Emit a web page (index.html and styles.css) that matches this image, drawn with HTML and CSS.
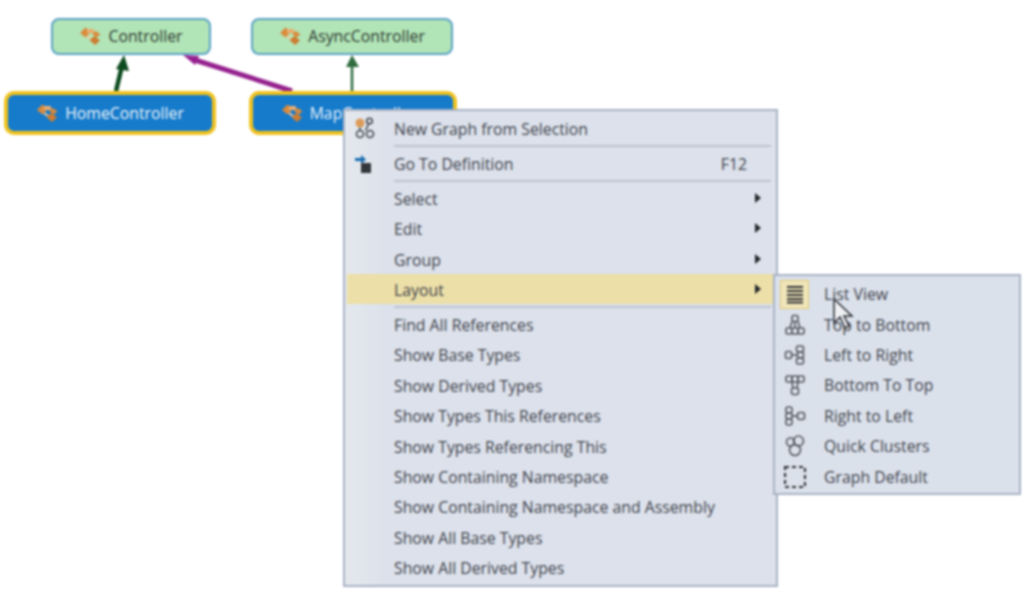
FILE: index.html
```html
<!doctype html>
<html>
    <head>
        <meta charset="UTF-8" />
        <meta name="viewport" content="width=device-width" />
        <title>Code Map</title>
        <link rel="stylesheet" href="styles.css">
    </head>
    <body>
        <svg class="defs" width="0" height="0">
            <symbol id="classIcon" viewBox="0 0 24 20">
                <path d="M1 7 6.500 1.500 12 6 6.500 11.500z" fill="#d98a3c" />
                <path d="M8 3h7v4H8z" fill="#e8ad70" />
                <path d="M13 7.500l4-2.500 4.500 3.500-4 3z" fill="#d98a3c" />
                <path d="M10.500 14l5-4 5.500 4.500-5 4.500z" fill="#cd7c30" />
                <path d="M8 10l4 3" stroke="#f3c89a" stroke-width="2" fill="none" />
            </symbol>
        </svg>

        <div class="canvas">
            <svg class="edges" width="1024" height="592" viewBox="0 0 1024 592">
                <path d="M116 91 122 66" stroke="#0c4a1e" stroke-width="4.500" fill="none" />
                <path d="M124 55 116 69 129 71z" fill="#0c4a1e" />
                <path d="M292 91 195 60" stroke="#96228f" stroke-width="5" fill="none" />
                <path d="M183 55 199 56 195 65z" fill="#96228f" />
                <path d="M352 91V64" stroke="#2f6b3f" stroke-width="2.500" fill="none" />
                <path d="M352 55 346 67H359z" fill="#2f6b3f" />
            </svg>

            <div class="node base nodeController">
                <svg class="nodeIcon"><use href="#classIcon" /></svg>
                <span>Controller</span>
            </div>
            <div class="node base nodeAsync">
                <svg class="nodeIcon"><use href="#classIcon" /></svg>
                <span>AsyncController</span>
            </div>
            <div class="node picked nodeHome">
                <svg class="nodeIcon"><use href="#classIcon" /></svg>
                <span>HomeController</span>
            </div>
            <div class="node picked nodeMap">
                <svg class="nodeIcon"><use href="#classIcon" /></svg>
                <span>MapController</span>
            </div>

            <div class="menu mainMenu">
                <div class="item">
                    <svg class="icon" viewBox="0 0 22 22" fill="none" stroke="#44484f" stroke-width="1.600">
                        <circle cx="6" cy="6" r="4.500" fill="#dc9b58" stroke="none" />
                        <circle cx="15.500" cy="4" r="2.800" />
                        <path d="M14.500 7 11.500 13.500M6 10.500v3" />
                        <circle cx="6" cy="17" r="3.500" />
                        <circle cx="16" cy="17" r="3.500" />
                    </svg>
                    <span class="label">New Graph from Selection</span>
                </div>
                <div class="sep"></div>
                <div class="item">
                    <svg class="icon" viewBox="0 0 22 22">
                        <path d="M1 6h6V3l5 4.500L7 12V9H1z" fill="#1a6cb0" />
                        <rect x="7" y="11" width="10" height="10" fill="#33363b" />
                    </svg>
                    <span class="label">Go To Definition</span>
                    <span class="key">F12</span>
                </div>
                <div class="sep"></div>
                <div class="item"><span class="icon"></span><span class="label">Select</span><span class="more"></span></div>
                <div class="item"><span class="icon"></span><span class="label">Edit</span><span class="more"></span></div>
                <div class="item"><span class="icon"></span><span class="label">Group</span><span class="more"></span></div>
                <div class="item open"><span class="icon"></span><span class="label">Layout</span><span class="more"></span></div>
                <div class="sep"></div>
                <div class="item"><span class="icon"></span><span class="label">Find All References</span></div>
                <div class="item"><span class="icon"></span><span class="label">Show Base Types</span></div>
                <div class="item"><span class="icon"></span><span class="label">Show Derived Types</span></div>
                <div class="item"><span class="icon"></span><span class="label">Show Types This References</span></div>
                <div class="item"><span class="icon"></span><span class="label">Show Types Referencing This</span></div>
                <div class="item"><span class="icon"></span><span class="label">Show Containing Namespace</span></div>
                <div class="item"><span class="icon"></span><span class="label">Show Containing Namespace and Assembly</span></div>
                <div class="item"><span class="icon"></span><span class="label">Show All Base Types</span></div>
                <div class="item"><span class="icon"></span><span class="label">Show All Derived Types</span></div>
            </div>

            <div class="menu subMenu">
                <div class="item">
                    <span class="iconBox">
                        <svg class="icon" viewBox="0 0 22 22" fill="none" stroke="#2f3136" stroke-width="2">
                            <path d="M3 4h16M3 8h16M3 12h16M3 16h16M3 19.500h16" />
                        </svg>
                    </span>
                    <span class="label">List View</span>
                </div>
                <div class="item">
                    <span class="iconBox">
                        <svg class="icon" viewBox="0 0 22 22" fill="none" stroke="#55585f" stroke-width="1.600">
                            <rect x="8" y="1.500" width="6" height="6" rx="1.500" />
                            <path d="M8 7.500 6 14M14 7.500l2 6.500M11 7.500V14" />
                            <rect x="2" y="14" width="6" height="6" rx="1.500" />
                            <rect x="8" y="14" width="6" height="6" rx="1.500" />
                            <rect x="14" y="14" width="6" height="6" rx="1.500" />
                        </svg>
                    </span>
                    <span class="label">Top to Bottom</span>
                </div>
                <div class="item">
                    <span class="iconBox">
                        <svg class="icon" viewBox="0 0 22 22" fill="none" stroke="#55585f" stroke-width="1.600">
                            <rect x="1.500" y="7.500" width="6" height="7" rx="1.500" />
                            <path d="M7.500 11h6" />
                            <rect x="12.500" y="2" width="7" height="6" rx="2" />
                            <rect x="13.500" y="8" width="6" height="6" rx="2" />
                            <rect x="12.500" y="14" width="7" height="6" rx="2" />
                        </svg>
                    </span>
                    <span class="label">Left to Right</span>
                </div>
                <div class="item">
                    <span class="iconBox">
                        <svg class="icon" viewBox="0 0 22 22" fill="none" stroke="#55585f" stroke-width="1.600">
                            <rect x="2" y="2" width="6" height="6" rx="1.500" />
                            <rect x="8" y="2" width="6" height="6" rx="1.500" />
                            <rect x="14" y="2" width="6" height="6" rx="1.500" />
                            <path d="M8 8l1 6M14 8l-1 6" />
                            <rect x="7.500" y="14" width="7" height="6.500" rx="2" />
                        </svg>
                    </span>
                    <span class="label">Bottom To Top</span>
                </div>
                <div class="item">
                    <span class="iconBox">
                        <svg class="icon" viewBox="0 0 22 22" fill="none" stroke="#55585f" stroke-width="1.600">
                            <rect x="2" y="2" width="6" height="6" rx="2" />
                            <rect x="2" y="8" width="6" height="6" rx="2" />
                            <rect x="2" y="14" width="6" height="6" rx="2" />
                            <path d="M8 11h6" />
                            <rect x="13.500" y="7.500" width="7" height="7" rx="2.500" />
                        </svg>
                    </span>
                    <span class="label">Right to Left</span>
                </div>
                <div class="item">
                    <span class="iconBox">
                        <svg class="icon" viewBox="0 0 22 22" fill="none" stroke="#55585f" stroke-width="1.600">
                            <circle cx="6.500" cy="7" r="4" />
                            <circle cx="14.500" cy="6" r="5" />
                            <circle cx="11" cy="15" r="5.500" />
                        </svg>
                    </span>
                    <span class="label">Quick Clusters</span>
                </div>
                <div class="item">
                    <span class="iconBox">
                        <svg class="icon" viewBox="0 0 22 22" fill="none" stroke="#2f3136" stroke-width="2.200">
                            <rect x="1" y="1" width="20" height="20" stroke-dasharray="4 3" />
                        </svg>
                    </span>
                    <span class="label">Graph Default</span>
                </div>
            </div>

            <svg class="cursor" width="22" height="34" viewBox="0 0 22 34">
                <path d="M2 1v24l6-6 5 11 4-2-5-10h8z" fill="#eef0f4" stroke="#2b2d33" stroke-width="1.500" />
            </svg>
        </div>
    </body>
</html>
```

FILE: styles.css
```css
html,
body {
    background-color: white;
    margin: 0;
}
body {
    font-family: "Open Sans", "Liberation Sans", sans-serif;
    font-size: 15.8px;
    color: #3f434b;
}
.defs {
    position: absolute;
}
.canvas {
    position: relative;
    width: 1024px;
    height: 592px;
    overflow: hidden;
    filter: blur(0.8px);
}
.edges {
    position: absolute;
    top: 0;
    left: 0;
}

/* graph nodes */
.node {
    position: absolute;
    display: flex;
    align-items: center;
    justify-content: center;
    gap: 5px;
    box-sizing: border-box;
}
.nodeIcon {
    width: 24px;
    height: 20px;
}
.base {
    top: 18px;
    height: 37px;
    padding-bottom: 2px;
    background-color: #b1e4b6;
    border: 2px solid #5ba3c4;
    border-radius: 8px;
    color: #2f3a33;
}
.picked {
    top: 91px;
    height: 44px;
    background-color: #167bcb;
    border: 4px solid #efc21f;
    border-radius: 10px;
    color: #eef5fb;
}
.nodeController {
    left: 51px;
    width: 160px;
}
.nodeAsync {
    left: 251px;
    width: 202px;
}
.nodeHome {
    left: 4px;
    width: 212px;
}
.nodeMap {
    left: 249px;
    width: 208px;
    padding-right: 9px;
}

/* context menus */
.menu {
    position: absolute;
    box-sizing: border-box;
    background: linear-gradient(to right, #e4e8ee 0, #dce1eb 40px);
    border: 2px solid #a9b2c4;
}
.mainMenu {
    left: 343px;
    top: 109px;
    width: 435px;
    height: 478px;
    padding: 2px 2px;
}
.subMenu {
    left: 773px;
    top: 274px;
    width: 248px;
    height: 221px;
    padding: 3px 2px;
    background: #dbe1eb;
}
.item {
    display: flex;
    align-items: center;
    height: 30.4px;
}
.icon {
    width: 22px;
    height: 22px;
    margin-left: 7px;
    margin-right: 18px;
    flex-shrink: 0;
}
.label {
    flex: 1;
    white-space: nowrap;
}
.mainMenu .label,
.key {
    padding-top: 2px;
}
.key {
    margin-right: 27px;
}
.more {
    width: 0;
    height: 0;
    margin-right: 13px;
    border-left: 6px solid #25272b;
    border-top: 5px solid transparent;
    border-bottom: 5px solid transparent;
}
.open {
    background-color: #ecdfa8;
}
.sep {
    height: 2px;
    margin: 1.3px 3px 1.2px 47px;
    background-color: #bcc3cf;
}
.subMenu .item {
    padding-left: 3px;
}
.iconBox {
    display: flex;
    align-items: center;
    justify-content: center;
    box-sizing: border-box;
    width: 29px;
    height: 29px;
    margin-right: 15px;
    border: 1px solid transparent;
}
.iconBox .icon {
    margin: 0;
}
.subMenu .item:first-child .iconBox {
    background-color: #efe5b8;
    border-color: #e3c97b;
}
.cursor {
    position: absolute;
    left: 832px;
    top: 298px;
}
```
